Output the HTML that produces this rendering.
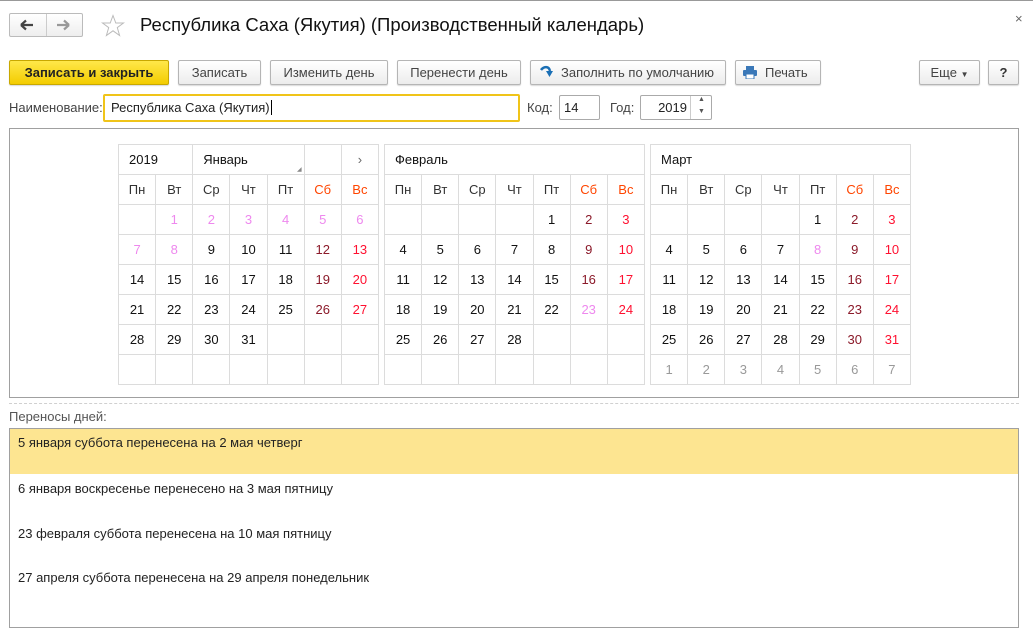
<!DOCTYPE html>
<html><head><meta charset="utf-8"><style>
*{box-sizing:border-box}
body{margin:0;width:1033px;height:613px;overflow:hidden;background:#fff;font-family:"Liberation Sans",Arial,sans-serif;font-size:13px;color:#333;position:relative}
.a{position:absolute}
.btn{position:absolute;top:60px;height:25px;border:1px solid #b5b5b5;border-radius:2px;background:linear-gradient(#fff,#ececec);box-shadow:0 1px 1px rgba(0,0,0,.15);text-align:center;line-height:23px;color:#444;font-size:13px;white-space:nowrap}
.inp{position:absolute;border:1px solid #aaa;border-radius:2px;background:#fff;height:25px;line-height:23px;font-size:13px;color:#222;padding-left:4px}
table{position:absolute;border-collapse:collapse;table-layout:fixed;top:144px;width:261px}
td{border:1px solid #dcdcdc;height:30px;text-align:center;padding:0;font-size:13px;color:#111}
.h td{color:#333}
.h td.w{color:#ff4500}
.s{color:#8b1a2a!important}.u{color:#ff1030!important}.p{color:#ee88ee!important}.g{color:#999!important}
.row{position:absolute;left:10px;width:1008px;padding-left:8px;font-size:13px;color:#222}
</style></head><body>
<div class="a" style="left:0;top:0;width:1033px;height:1px;background:#999"></div>
<div class="a" style="left:9px;top:13px;width:74px;height:24px;border:1px solid #bbb;border-radius:2px;background:linear-gradient(#fff,#eee)"></div>
<div class="a" style="left:46px;top:14px;width:1px;height:22px;background:#ccc"></div>
<svg class="a" style="left:20px;top:18px" width="14" height="14"><path d="M1 7H13M1 7L6 2.5M1 7L6 11.5" stroke="#444" stroke-width="2.2" fill="none"/></svg>
<svg class="a" style="left:56px;top:18px" width="14" height="14"><path d="M1 7H13M13 7L8 2.5M13 7L8 11.5" stroke="#999" stroke-width="2.2" fill="none"/></svg>
<svg class="a" style="left:101px;top:14px" width="24" height="24"><path d="M12 1.5L14.8 9H22.5L16.3 13.6L18.6 21.5L12 16.8L5.4 21.5L7.7 13.6L1.5 9H9.2Z" fill="none" stroke="#bbb" stroke-width="1"/></svg>
<div class="a" style="left:140px;top:14px;font-size:18.5px;color:#111;white-space:nowrap">Республика Саха (Якутия) (Производственный календарь)</div>
<div class="a" style="left:1015px;top:11px;font-size:13px;color:#666">×</div>

<div class="btn" style="left:9px;width:160px;background:linear-gradient(#ffe84a,#f3cc00);border-color:#c8a800;color:#222;font-weight:bold">Записать и закрыть</div>
<div class="btn" style="left:178px;width:83px">Записать</div>
<div class="btn" style="left:270px;width:118px">Изменить день</div>
<div class="btn" style="left:397px;width:124px">Перенести день</div>
<div class="btn" style="left:530px;width:196px;text-align:left;padding-left:30px">Заполнить по умолчанию</div>
<svg class="a" style="left:539px;top:65px" width="14" height="14"><path d="M2 5C5 1 10 1 11 6" stroke="#1a6fb5" stroke-width="2.5" fill="none"/><path d="M7 6H14L10.5 12Z" fill="#1a6fb5"/></svg>
<div class="btn" style="left:735px;width:86px;text-align:left;padding-left:29px">Печать</div>
<svg class="a" style="left:743px;top:66px" width="14" height="13"><rect x="3" y="0" width="8" height="4" fill="#3a78b8"/><rect x="0" y="4" width="14" height="6" rx="1" fill="#3a78b8"/><rect x="3" y="8" width="8" height="5" fill="#fff" stroke="#3a78b8"/></svg>
<div class="btn" style="left:919px;width:61px">Еще <span style="font-size:8px">▼</span></div>
<div class="btn" style="left:988px;width:31px;font-weight:bold;color:#333">?</div>

<div class="a" style="left:9px;top:100px;color:#444">Наименование:</div>
<div class="inp" style="left:103px;top:94px;width:417px;height:28px;border:2px solid #f0c419;line-height:24px;padding-left:6px">Республика Саха (Якутия)<span style="border-left:1px solid #000;margin-left:1px"></span></div>
<div class="a" style="left:527px;top:100px;color:#444">Код:</div>
<div class="inp" style="left:559px;top:95px;width:41px">14</div>
<div class="a" style="left:610px;top:100px;color:#444">Год:</div>
<div class="inp" style="left:640px;top:95px;width:72px;text-align:right;padding-right:24px">2019</div>
<div class="a" style="left:690px;top:96px;width:1px;height:23px;background:#ccc"></div>
<div class="a" style="left:698px;top:96px;font-size:7px;color:#555">▲</div>
<div class="a" style="left:698px;top:108px;font-size:7px;color:#555">▼</div>

<div class="a" style="left:9px;top:128px;width:1010px;height:270px;border:1px solid #a0a0a0"></div>

<table style="left:118px"><colgroup><col span="7" style="width:37px"></colgroup>
<tr><td colspan="2" style="text-align:left;padding-left:10px">2019</td><td colspan="3" style="text-align:left;padding-left:10px;position:relative">Январь<span style="position:absolute;right:2px;bottom:1px;font-size:6px;color:#888">◢</span></td><td></td><td style="color:#666">›</td></tr>
<tr class="h"><td>Пн</td><td>Вт</td><td>Ср</td><td>Чт</td><td>Пт</td><td class="w">Сб</td><td class="w">Вс</td></tr>
<tr><td></td><td class="p">1</td><td class="p">2</td><td class="p">3</td><td class="p">4</td><td class="p">5</td><td class="p">6</td></tr>
<tr><td class="p">7</td><td class="p">8</td><td>9</td><td>10</td><td>11</td><td class="s">12</td><td class="u">13</td></tr>
<tr><td>14</td><td>15</td><td>16</td><td>17</td><td>18</td><td class="s">19</td><td class="u">20</td></tr>
<tr><td>21</td><td>22</td><td>23</td><td>24</td><td>25</td><td class="s">26</td><td class="u">27</td></tr>
<tr><td>28</td><td>29</td><td>30</td><td>31</td><td></td><td></td><td></td></tr>
<tr><td></td><td></td><td></td><td></td><td></td><td></td><td></td></tr>
</table>

<table style="left:384px"><colgroup><col span="7" style="width:37px"></colgroup>
<tr><td colspan="7" style="text-align:left;padding-left:10px">Февраль</td></tr>
<tr class="h"><td>Пн</td><td>Вт</td><td>Ср</td><td>Чт</td><td>Пт</td><td class="w">Сб</td><td class="w">Вс</td></tr>
<tr><td></td><td></td><td></td><td></td><td>1</td><td class="s">2</td><td class="u">3</td></tr>
<tr><td>4</td><td>5</td><td>6</td><td>7</td><td>8</td><td class="s">9</td><td class="u">10</td></tr>
<tr><td>11</td><td>12</td><td>13</td><td>14</td><td>15</td><td class="s">16</td><td class="u">17</td></tr>
<tr><td>18</td><td>19</td><td>20</td><td>21</td><td>22</td><td class="p">23</td><td class="u">24</td></tr>
<tr><td>25</td><td>26</td><td>27</td><td>28</td><td></td><td></td><td></td></tr>
<tr><td></td><td></td><td></td><td></td><td></td><td></td><td></td></tr>
</table>

<table style="left:650px"><colgroup><col span="7" style="width:37px"></colgroup>
<tr><td colspan="7" style="text-align:left;padding-left:10px">Март</td></tr>
<tr class="h"><td>Пн</td><td>Вт</td><td>Ср</td><td>Чт</td><td>Пт</td><td class="w">Сб</td><td class="w">Вс</td></tr>
<tr><td></td><td></td><td></td><td></td><td>1</td><td class="s">2</td><td class="u">3</td></tr>
<tr><td>4</td><td>5</td><td>6</td><td>7</td><td class="p">8</td><td class="s">9</td><td class="u">10</td></tr>
<tr><td>11</td><td>12</td><td>13</td><td>14</td><td>15</td><td class="s">16</td><td class="u">17</td></tr>
<tr><td>18</td><td>19</td><td>20</td><td>21</td><td>22</td><td class="s">23</td><td class="u">24</td></tr>
<tr><td>25</td><td>26</td><td>27</td><td>28</td><td>29</td><td class="s">30</td><td class="u">31</td></tr>
<tr><td class="g">1</td><td class="g">2</td><td class="g">3</td><td class="g">4</td><td class="g">5</td><td class="g">6</td><td class="g">7</td></tr>
</table>

<div class="a" style="left:9px;top:403px;width:1010px;border-top:1px dashed #d0d0d0"></div>
<div class="a" style="left:9px;top:409px;color:#555">Переносы дней:</div>
<div class="a" style="left:9px;top:428px;width:1010px;height:200px;border:1px solid #a0a0a0"></div>
<div class="a" style="left:10px;top:429px;width:1008px;height:45px;background:#fde591"></div>
<div class="row" style="top:435px">5 января суббота перенесена на 2 мая четверг</div>
<div class="row" style="top:481px">6 января воскресенье перенесено на 3 мая пятницу</div>
<div class="row" style="top:526px">23 февраля суббота перенесена на 10 мая пятницу</div>
<div class="row" style="top:570px">27 апреля суббота перенесена на 29 апреля понедельник</div>
</body></html>
